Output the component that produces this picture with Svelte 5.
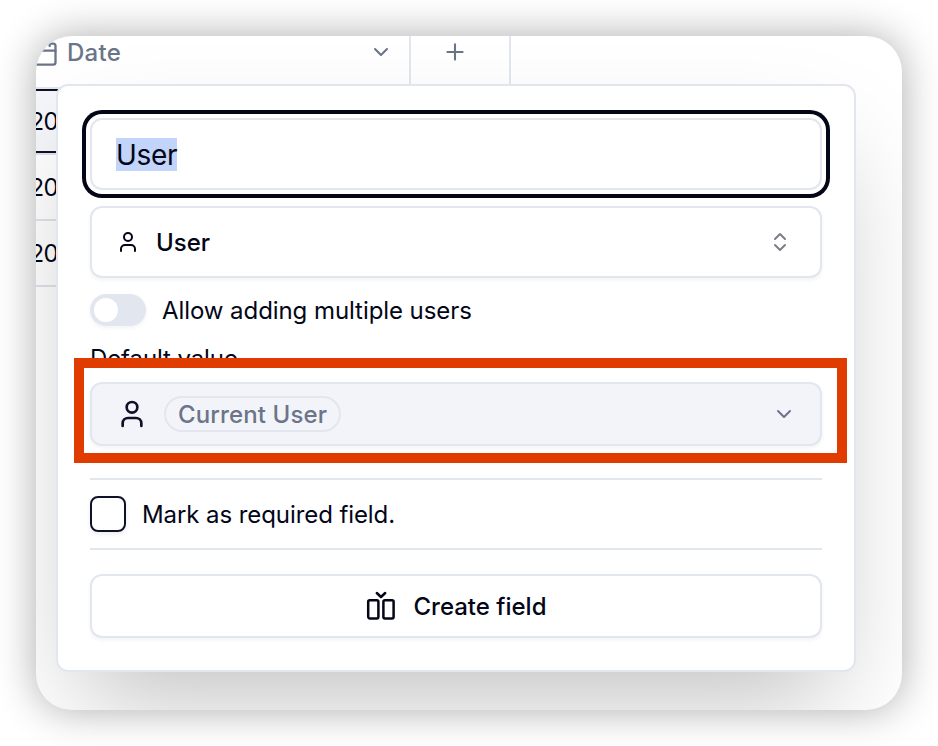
<script>
  const rows = ['20', '20', '20'];
</script>

{#snippet person(size)}
  <svg width={size} height={size} viewBox="0 0 24 24" fill="none" stroke="currentColor" stroke-width="2" stroke-linecap="round" stroke-linejoin="round"><circle cx="12" cy="7" r="4" /><path d="M19 21v-2a4 4 0 0 0-4-4H9a4 4 0 0 0-4 4v2" /></svg>
{/snippet}

{#snippet chevron()}
  <svg class="chev" width="24" height="24" viewBox="0 0 24 24" fill="none" stroke="currentColor" stroke-width="2" stroke-linecap="round" stroke-linejoin="round"><path d="m6 9 6 6 6-6" /></svg>
{/snippet}

<main>
  <div class="window">
    <div class="table">
      <div class="head">
        <div class="date">
          <svg width="28" height="28" viewBox="0 0 24 24" fill="none" stroke="currentColor" stroke-width="2" stroke-linecap="round" stroke-linejoin="round"><path d="M8 2v4M16 2v4M3 10h18" /><rect x="3" y="4" width="18" height="18" rx="2" /></svg>
          <span class="datelabel">Date</span>
          {@render chevron()}
        </div>
        <div class="add">
          <svg width="28" height="28" viewBox="0 0 24 24" fill="none" stroke="currentColor" stroke-width="1.8" stroke-linecap="round"><path d="M5.5 12h13M12 5.5v13" /></svg>
        </div>
      </div>
      {#each rows as row, i}
        <div class="row" class:selected={i === 0}><span>{row}</span></div>
      {/each}
    </div>

    <section class="popover">
      <div class="input"><mark><span>User</span></mark></div>
      <div class="select">
        {@render person(24)}
        <span class="selectlabel">User</span>
        <svg class="updown" width="24" height="24" viewBox="0 0 24 24" fill="none" stroke="currentColor" stroke-width="2" stroke-linecap="round" stroke-linejoin="round"><path d="m7 15 5 5 5-5M7 9l5-5 5 5" /></svg>
      </div>
      <div class="toggle"><span class="switch"><i></i></span><span class="togglelabel">Allow adding multiple users</span></div>
      <div class="label"><span>Default value</span></div>
      <div class="default">
        {@render person(32)}
        <span class="chip"><span>Current User</span></span>
        {@render chevron()}
        <div class="highlight"></div>
      </div>
      <div class="required"><span class="box"></span><span class="requiredlabel">Mark as required field.</span></div>
      <div class="create">
        <svg width="32" height="32" viewBox="0 0 32 32" fill="none" stroke="currentColor" stroke-width="2.5" stroke-linecap="round" stroke-linejoin="round"><rect x="3.2" y="10.2" width="10.2" height="18.2" rx="1.6" /><rect x="18.4" y="10.2" width="10.2" height="18.2" rx="1.6" /><path d="m11.8 3 4.2 4 4.2-4" /></svg>
        <span class="createlabel">Create field</span>
      </div>
    </section>
  </div>
</main>

<style>
  :global(body) { background: #fff; }
  main {
    box-sizing: border-box;
    width: 938px;
    height: 746px;
    padding: 36px;
    overflow: hidden;
    font: 400 24px/32px Inter, sans-serif;
    color: #020617;
  }
  main * { box-sizing: border-box; }
  svg { display: block; flex: none; }
  span { white-space: nowrap; }
  .window {
    position: relative;
    width: 866px;
    height: 674px;
    border-radius: 36px;
    background: #fff;
    box-shadow: 0 0 42px rgba(0, 0, 0, .33);
    overflow: hidden;
  }
  .head { display: flex; height: 51px; color: #6b758a; }
  .date {
    display: flex;
    align-items: center;
    width: 375px;
    padding: 0 16px 18px 0;
    border-right: 2px solid #e2e6ee;
    font-weight: 500;
  }
  .date > svg:first-child { margin-left: -5.5px; }
  .datelabel { margin-left: 8.5px; padding-top: 1px; letter-spacing: .25px; }
  .chev { margin-left: auto; }
  .date .chev { margin-top: -1px; }
  .add {
    display: flex;
    justify-content: center;
    width: 100px;
    padding: 2px 10px 0 0;
    border-right: 2px solid #e2e6ee;
  }
  .row {
    display: flex;
    align-items: center;
    width: 40px;
    height: 66px;
    border-bottom: 2px solid #dfe3eb;
  }
  .row span { margin-left: -6.5px; padding-top: 2px; letter-spacing: -.6px; }
  .row.selected {
    border-top: 2px solid #e2e6ee;
    height: 68px;
    background: #f5f6fa;
    box-shadow: inset 0 2px #0f1226, inset 0 -2px #0f1226;
  }
  .popover {
    position: absolute;
    left: 20px;
    top: 48px;
    display: flex;
    flex-direction: column;
    width: 800px;
    height: 588px;
    padding: 32px;
    border: 2px solid #e2e6ee;
    border-radius: 12px;
    background: #fff;
    box-shadow: 0 50px 100px -24px rgba(0, 0, 0, .25);
  }
  .input, .select, .default, .create {
    display: flex;
    align-items: center;
    flex: none;
    border: 2px solid #e2e6ee;
    border-radius: 12px;
    background: #fff;
  }
  .select, .default, .create { box-shadow: 0 2px 4px rgba(0, 0, 0, .05); }
  .input {
    height: 72px;
    padding-left: 24px;
    font-size: 28px;
    letter-spacing: -.3px;
    box-shadow: 0 0 0 4px #fff, 0 0 0 8px #020617;
  }
  mark { height: 33px; line-height: 35px; background: #c3d4fb; color: inherit; }
  .select { height: 72px; margin-top: 16px; padding: 0 28px 0 24px; font-weight: 500; }
  .selectlabel { margin-left: 16px; padding-top: 2px; }
  .updown { margin-left: auto; color: #7c7f88; }
  .toggle { display: flex; align-items: center; height: 32px; margin-top: 16px; }
  .switch {
    width: 56px;
    height: 32px;
    padding: 4px;
    border-radius: 16px;
    background: #e2e6ee;
    box-shadow: 0 2px 4px rgba(0, 0, 0, .05);
  }
  .switch i { display: block; width: 24px; height: 24px; border-radius: 50%; background: #fff; }
  .togglelabel { margin-left: 16px; padding-top: 2px; letter-spacing: -.07px; }
  .label { height: 32px; margin-top: 16px; padding-top: 1px; letter-spacing: -.1px; }
  .default {
    position: relative;
    height: 64px;
    margin-top: 8px;
    padding: 0 24px;
    background: #f3f4f9;
  }
  .default > :global(svg:first-child) { color: #0f1226; }
  .chip {
    display: flex;
    align-items: center;
    height: 36px;
    margin-left: 16px;
    padding: 2px 12px 0;
    border: 2px solid #e2e6ee;
    border-radius: 18px;
    font-weight: 500;
    letter-spacing: .12px;
    color: #6b758a;
  }
  .default .chev { color: #6b758a; }
  .highlight {
    position: absolute;
    left: -18.3px;
    top: -26.3px;
    width: 773.6px;
    height: 105.7px;
    border: 10px solid #e03c00;
  }
  .required {
    display: flex;
    align-items: center;
    height: 72px;
    margin-top: 32px;
    border: solid #e2e6ee;
    border-width: 2px 0;
  }
  .box {
    width: 36px;
    height: 36px;
    border: 2px solid #0f1226;
    border-radius: 8px;
    box-shadow: 0 2px 4px rgba(0, 0, 0, .08);
  }
  .requiredlabel { margin-left: 16px; padding-top: 2px; letter-spacing: -.08px; }
  .create { justify-content: center; height: 64px; margin-top: 24px; font-weight: 500; }
  .createlabel { margin-left: 16px; padding-top: 2px; }
</style>
